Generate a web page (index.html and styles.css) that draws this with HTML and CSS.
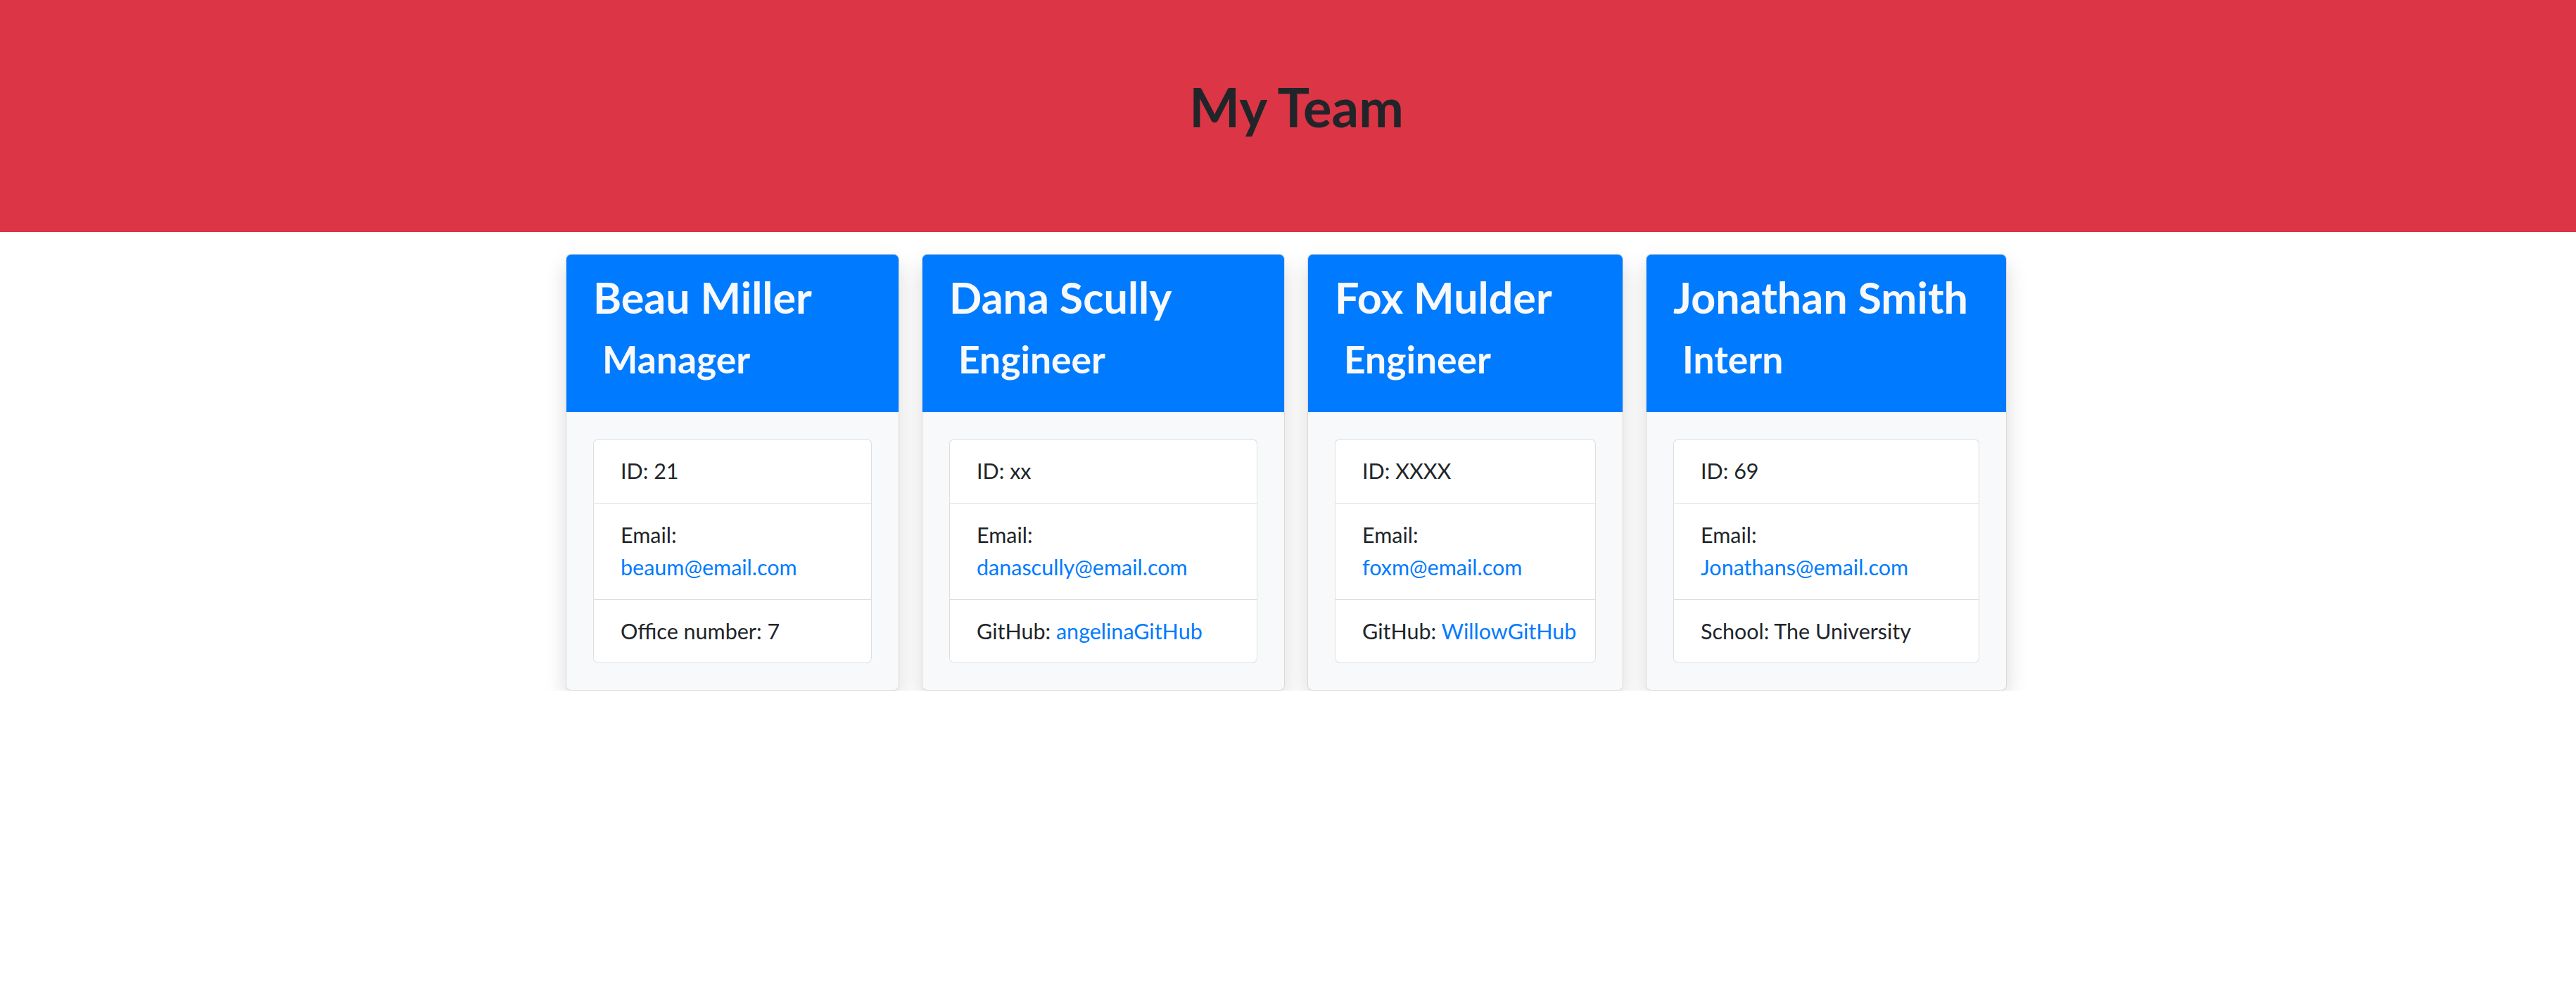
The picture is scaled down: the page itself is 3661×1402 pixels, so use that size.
FILE: index.html
```html
<!DOCTYPE html>
<html lang="en">
<head>
<meta charset="utf-8">
<title>My Team</title>
<link rel="stylesheet" href="styles.css">
</head>
<body>
<header class="jumbotron">
  <h1 class="title">My Team</h1>
</header>
<main class="team">
  <div class="card">
    <div class="card-header">
      <h2 class="name">Beau Miller</h2>
      <h3 class="role"><i class="icon"></i> Manager</h3>
    </div>
    <div class="card-body">
      <ul class="list-group">
        <li class="list-item">ID: 21</li>
        <li class="list-item list-item-wrap">Email: <a href="#">beaum@email.com</a></li>
        <li class="list-item">Office number: 7</li>
      </ul>
    </div>
  </div>
  <div class="card">
    <div class="card-header">
      <h2 class="name">Dana Scully</h2>
      <h3 class="role"><i class="icon"></i> Engineer</h3>
    </div>
    <div class="card-body">
      <ul class="list-group">
        <li class="list-item">ID: xx</li>
        <li class="list-item list-item-wrap">Email: <a href="#">danascully@email.com</a></li>
        <li class="list-item">GitHub: <a href="#">angelinaGitHub</a></li>
      </ul>
    </div>
  </div>
  <div class="card">
    <div class="card-header">
      <h2 class="name">Fox Mulder</h2>
      <h3 class="role"><i class="icon"></i> Engineer</h3>
    </div>
    <div class="card-body">
      <ul class="list-group">
        <li class="list-item">ID: XXXX</li>
        <li class="list-item list-item-wrap">Email: <a href="#">foxm@email.com</a></li>
        <li class="list-item">GitHub: <a href="#">WillowGitHub</a></li>
      </ul>
    </div>
  </div>
  <div class="card">
    <div class="card-header">
      <h2 class="name">Jonathan Smith</h2>
      <h3 class="role"><i class="icon"></i> Intern</h3>
    </div>
    <div class="card-body">
      <ul class="list-group">
        <li class="list-item">ID: 69</li>
        <li class="list-item list-item-wrap">Email: <a href="#">Jonathans@email.com</a></li>
        <li class="list-item">School: The University</li>
      </ul>
    </div>
  </div>
</main>
</body>
</html>
```
FILE: styles.css
```css
* { box-sizing: border-box; }

html, body {
  margin: 0;
  padding: 0;
  background: #ffffff;
}

body {
  font-family: Lato, "Segoe UI", "Open Sans", sans-serif;
  font-size: 30.5px;
  line-height: 1.5;
  color: #212529;
}

.jumbotron {
  background: #dc3545;
  height: 330px;
  padding-top: 106px;
  text-align: center;
}

.title {
  margin: 0;
  padding-left: 24px;
  font-size: 76px;
  font-weight: 700;
  line-height: 1.2;
  color: #212529;
}

.team {
  display: flex;
  justify-content: center;
  align-items: stretch;
  gap: 32px;
  padding-top: 31px;
  padding-right: 5px;
}

.card {
  flex: none;
  display: flex;
  flex-direction: column;
  border: 1px solid rgba(0, 0, 0, 0.125);
  border-radius: 7.6px;
  box-shadow: 0 15px 30px rgba(0, 0, 0, 0.15);
  background: #f8f9fa;
  overflow: hidden;
}

.card:nth-child(1) { width: 474px; }
.card:nth-child(2) { width: 516px; }
.card:nth-child(3) { width: 449px; }
.card:nth-child(4) { width: 513px; }

.card-header {
  background: #007bff;
  color: #f8f9fa;
  padding: 24px 38px 44px;
}

.name {
  margin: 0 0 19px;
  font-size: 61px;
  font-weight: 700;
  line-height: 1.2;
}

.role {
  margin: 0;
  font-size: 53.4px;
  font-weight: 700;
  line-height: 1.2;
  white-space: pre;
}

.icon {
  display: inline;
}

.card-body {
  padding: 38px;
  flex: 1;
}

.list-group {
  list-style: none;
  margin: 0;
  padding: 0;
  background: #ffffff;
  border: 1px solid rgba(0, 0, 0, 0.125);
  border-radius: 7.6px;
}

.list-item {
  padding: 22px 38px;
  border-top: 1px solid rgba(0, 0, 0, 0.125);
  white-space: nowrap;
}

.list-item-wrap {
  white-space: normal;
}

.list-item:first-child {
  border-top: none;
}

.list-item a {
  color: #007bff;
  text-decoration: none;
}
```
